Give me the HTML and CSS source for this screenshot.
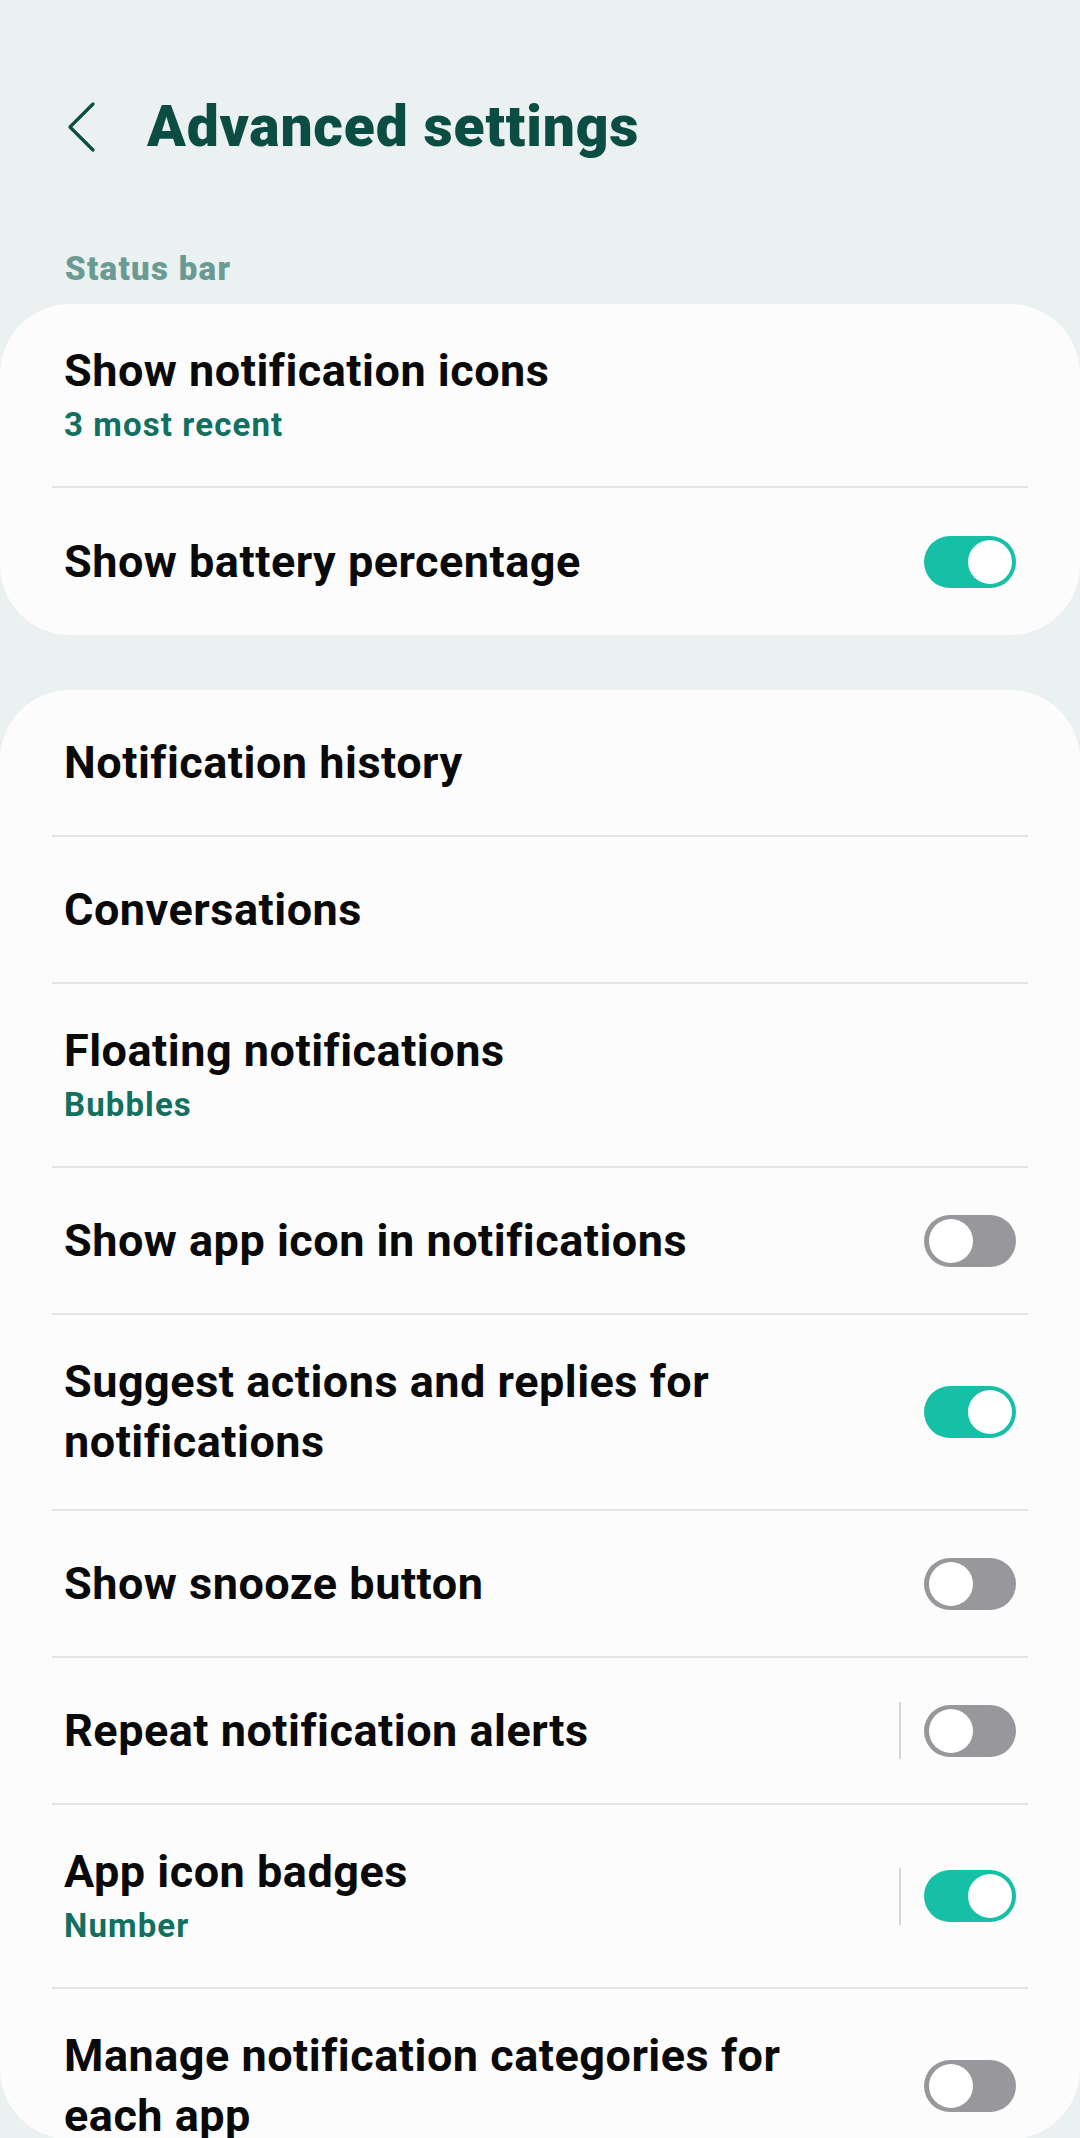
FILE: index.html
```html
<!DOCTYPE html>
<html lang="en">
<head>
  <meta charset="UTF-8">
  <title>Advanced settings</title>
  <link rel="stylesheet" href="styles.css">
</head>
<body>

<div class="header">
  <svg class="back" width="32" height="52" viewBox="0 0 32 52">
    <path d="M27 3 L4 26 L27 49" fill="none" stroke="#0b4d43" stroke-width="3.2" stroke-linecap="round" stroke-linejoin="round"/>
  </svg>
  <h1>Advanced settings</h1>
</div>

<div class="section-label">Status bar</div>

<div class="card">
  <div class="row">
    <div class="text">
      <div class="title">Show notification icons</div>
      <div class="sub">3 most recent</div>
    </div>
  </div>
  <div class="row">
    <div class="text">
      <div class="title">Show battery percentage</div>
    </div>
    <span class="switch on"></span>
  </div>
</div>

<div class="card list">
  <div class="row">
    <div class="text"><div class="title">Notification history</div></div>
  </div>
  <div class="row">
    <div class="text"><div class="title">Conversations</div></div>
  </div>
  <div class="row">
    <div class="text">
      <div class="title">Floating notifications</div>
      <div class="sub">Bubbles</div>
    </div>
  </div>
  <div class="row">
    <div class="text"><div class="title">Show app icon in notifications</div></div>
    <span class="switch"></span>
  </div>
  <div class="row">
    <div class="text"><div class="title">Suggest actions and replies for notifications</div></div>
    <span class="switch on"></span>
  </div>
  <div class="row">
    <div class="text"><div class="title">Show snooze button</div></div>
    <span class="switch"></span>
  </div>
  <div class="row">
    <div class="text"><div class="title">Repeat notification alerts</div></div>
    <span class="vline"></span>
    <span class="switch"></span>
  </div>
  <div class="row">
    <div class="text">
      <div class="title">App icon badges</div>
      <div class="sub">Number</div>
    </div>
    <span class="vline"></span>
    <span class="switch on"></span>
  </div>
  <div class="row">
    <div class="text"><div class="title">Manage notification categories for each app</div></div>
    <span class="switch"></span>
  </div>
</div>

</body>
</html>
```

FILE: styles.css
```css
html, body {
  margin: 0;
  padding: 0;
}
body {
  font-family: Roboto, "Noto Sans", sans-serif;
  background: #ebf1f0;
  width: 1080px;
  height: 2138px;
  overflow: hidden;
}
.header {
  display: flex;
  align-items: center;
  height: 70px;
  margin-top: 92px;
  padding-left: 66px;
}
.back {
  display: block;
  margin-right: 49px;
}
h1 {
  margin: 0;
  font-size: 57px;
  line-height: 70px;
  font-weight: 900;
  letter-spacing: 0.8px;
  color: #0b4d43;
}
.section-label {
  margin: 87px 0 15px 65px;
  font-size: 33px;
  line-height: 40px;
  font-weight: 900;
  letter-spacing: 1.3px;
  color: #6a9b92;
}
.card {
  background: #fcfcfc;
  border-radius: 70px;
  margin-bottom: 55px;
}
.list {
  max-height: 1449px;
  overflow: hidden;
  margin-bottom: 0;
}
.row {
  display: flex;
  align-items: center;
  box-sizing: border-box;
  min-height: 147px;
  padding: 37px 12px;
  margin: 0 52px;
  border-bottom: 2px solid #e4e4e6;
}
.row:last-child {
  border-bottom: none;
}
.text {
  flex: 1;
  padding-right: 60px;
}
.title {
  font-size: 45px;
  line-height: 60px;
  font-weight: 700;
  letter-spacing: 0.5px;
  color: #0a0a0a;
}
.sub {
  font-size: 33px;
  line-height: 48px;
  font-weight: 700;
  letter-spacing: 1.1px;
  color: #11705f;
}
.vline {
  width: 2px;
  height: 57px;
  background: #d6d6d8;
  margin-right: 23px;
}
.switch {
  position: relative;
  width: 92px;
  height: 52px;
  border-radius: 26px;
  background: #98979c;
  flex-shrink: 0;
}
.switch::after {
  content: "";
  position: absolute;
  top: 4px;
  left: 5px;
  width: 44px;
  height: 44px;
  border-radius: 50%;
  background: #fff;
}
.switch.on {
  background: #15c0a6;
}
.switch.on::after {
  left: auto;
  right: 4px;
}
```
